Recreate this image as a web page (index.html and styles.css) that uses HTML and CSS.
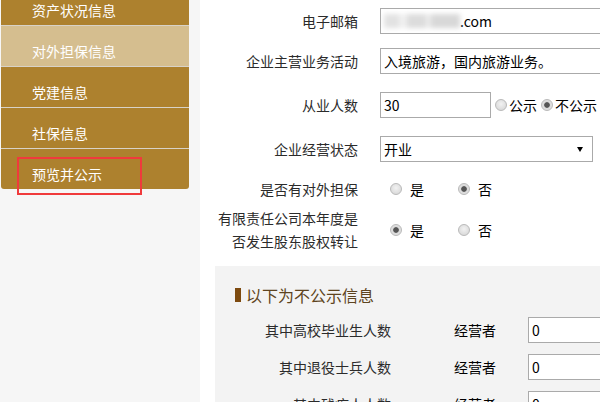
FILE: index.html
```html
<!DOCTYPE html>
<html lang="zh-CN">
<head>
<meta charset="utf-8">
<title>企业年报</title>
<link rel="stylesheet" href="styles.css">
</head>
<body>
<aside class="side">
  <ul class="menu">
    <li class="item">资产状况信息</li>
    <li class="item active">对外担保信息</li>
    <li class="item">党建信息</li>
    <li class="item">社保信息</li>
    <li class="item last">预览并公示</li>
  </ul>
  <div class="mark"></div>
</aside>
<main class="main">
  <div class="row r1">
    <label class="lbl">电子邮箱</label>
    <div class="box wide"><span class="redact"></span>.com</div>
  </div>
  <div class="row r2">
    <label class="lbl">企业主营业务活动</label>
    <div class="box wide">入境旅游，国内旅游业务。</div>
  </div>
  <div class="row r3">
    <label class="lbl">从业人数</label>
    <div class="box num">30</div>
    <span class="radio tight"></span><span class="rtxt">公示</span>
    <span class="radio tight on"></span><span class="rtxt">不公示</span>
  </div>
  <div class="row r4">
    <label class="lbl">企业经营状态</label>
    <div class="select"><span>开业</span><span class="arrow"></span></div>
  </div>
  <div class="row r5">
    <label class="lbl">是否有对外担保</label>
    <div class="choices">
      <span class="radio"></span><span class="ctxt">是</span>
      <span class="radio on"></span><span class="ctxt">否</span>
    </div>
  </div>
  <div class="row r6">
    <label class="lbl two">有限责任公司本年度是<br>否发生股东股权转让</label>
    <div class="choices">
      <span class="radio on"></span><span class="ctxt">是</span>
      <span class="radio"></span><span class="ctxt">否</span>
    </div>
  </div>
  <section class="hidden">
    <h3 class="htitle"><span class="bar"></span>以下为不公示信息</h3>
    <div class="hrow">
      <span class="hlbl">其中高校毕业生人数</span>
      <span class="who">经营者</span>
      <div class="box hbox">0</div>
    </div>
    <div class="hrow">
      <span class="hlbl">其中退役士兵人数</span>
      <span class="who">经营者</span>
      <div class="box hbox">0</div>
    </div>
    <div class="hrow">
      <span class="hlbl">其中残疾人人数</span>
      <span class="who">经营者</span>
      <div class="box hbox">0</div>
    </div>
  </section>
</main>
</body>
</html>
```
FILE: styles.css
```css
* { box-sizing: border-box; }
html, body { margin: 0; padding: 0; }
body {
  width: 600px;
  height: 402px;
  overflow: hidden;
  display: flex;
  font-family: "Noto Sans CJK SC", "Noto Sans", sans-serif;
  font-size: 14px;
  color: #333;
  background: #fff;
}
.side {
  position: relative;
  width: 200px;
  flex: none;
  background: #f6f6f6;
  padding-left: 1px;
}
.menu {
  list-style: none;
  margin: -15px 0 0 0;
  padding: 0;
  width: 188px;
}
.item {
  height: 41px;
  padding: 15px 0 0 31px;
  line-height: 20px;
  font-size: 14px;
  color: #fff;
  background: #ad812e;
  border-bottom: 1px solid #d8d2c8;
}
.item.active { background: #d5be8f; }
.item.last {
  height: 40px;
  border-bottom: none;
  border-radius: 0 0 3px 3px;
}
.mark {
  position: absolute;
  left: 17px;
  top: 157px;
  width: 125px;
  height: 38px;
  border: 2px solid #f03a3c;
}
.main {
  flex: 1;
  min-width: 0;
  padding-top: 8px;
  overflow: hidden;
}
.row {
  display: flex;
  align-items: center;
  white-space: nowrap;
}
.lbl {
  width: 158px;
  margin-right: 22px;
  text-align: right;
  color: #2b2b2b;
  flex: none;
}
.lbl.two { line-height: 23px; }
.r1, .r2, .r3, .r4 { height: 26px; }
.r2 { margin-top: 14px; }
.r3 { margin-top: 18px; }
.r4 { margin-top: 18px; }
.r5 { margin-top: 14px; height: 26px; }
.r6 { margin-top: 5px; }
.box {
  height: 26px;
  border: 1px solid #aaa;
  padding: 0 3px;
  line-height: 24px;
  color: #000;
  background: #fff;
  flex: none;
  overflow: hidden;
}
.wide { width: 260px; }
.num { width: 111px; }
.redact {
  display: inline-block;
  width: 76px;
  height: 14px;
  margin-top: 5px;
  vertical-align: top;
  background: linear-gradient(90deg, #e2e2e2 0 20%, #f0f0f0 20% 30%, #dcdcdc 30% 55%, #ececec 55% 62%, #d8d8d8 62% 100%);
  filter: blur(2.5px);
}
.radio {
  display: inline-block;
  width: 12px;
  height: 12px;
  border-radius: 50%;
  border: 1px solid #b9b9b9;
  background: radial-gradient(circle at 50% 40%, #f2f2f2 0, #dcdcdc 70%);
  flex: none;
}
.radio.on {
  background: radial-gradient(circle, #555 0, #555 2.4px, #dadada 3.2px, #e6e6e6 100%);
}
.radio.tight { margin-left: 4px; }
.rtxt { margin-left: 2px; color: #000; }
.choices {
  display: flex;
  align-items: center;
  padding-left: 10px;
}
.ctxt { margin: 0 34px 0 8px; color: #000; }
.select {
  width: 213px;
  height: 26px;
  border: 1px solid #aaa;
  display: flex;
  align-items: center;
  justify-content: space-between;
  padding: 0 9px 0 3px;
  color: #000;
}
.arrow {
  width: 0;
  height: 0;
  border-left: 3px solid transparent;
  border-right: 3px solid transparent;
  border-top: 5px solid #000;
}
.hidden {
  margin: 13px 0 0 15px;
  background: #f3f3f3;
  padding: 19px 0 20px 0;
}
.htitle {
  margin: 0 0 12px 20px;
  font-size: 16px;
  font-weight: normal;
  line-height: 20px;
  color: #5e4420;
  display: flex;
  align-items: center;
}
.bar {
  width: 6px;
  height: 14px;
  background: #7d4a0f;
  margin-right: 5px;
}
.hrow {
  display: flex;
  align-items: center;
  height: 26px;
  margin-bottom: 11px;
  white-space: nowrap;
}
.hlbl {
  width: 176px;
  text-align: right;
  color: #2b2b2b;
  flex: none;
}
.who {
  margin-left: 63px;
  width: 42px;
  color: #000;
  flex: none;
}
.hbox {
  margin-left: 32px;
  width: 120px;
}
```
